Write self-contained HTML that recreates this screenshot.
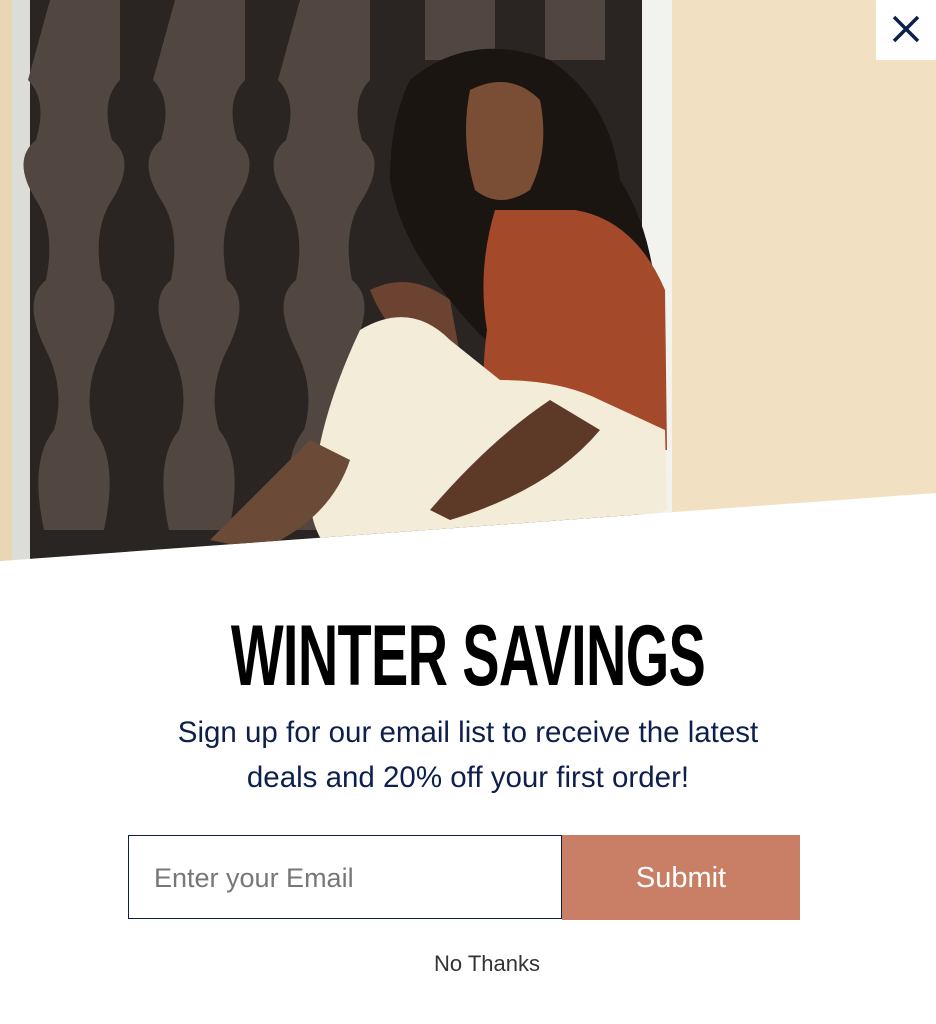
<!DOCTYPE html>
<html><head><meta charset="utf-8"><style>
html,body{margin:0;padding:0;width:936px;height:1024px;overflow:hidden;background:#fff;font-family:"Liberation Sans",sans-serif}
.photo{position:absolute;left:0;top:0}
.close{position:absolute;left:876px;top:0;width:60px;height:60px;background:#fff}
h1{position:absolute;left:0;width:936px;top:606px;margin:0;text-align:center;font-size:86px;font-weight:bold;color:#000;letter-spacing:-1px;transform:scaleX(0.65);transform-origin:center;line-height:100px}
.sub{position:absolute;left:0;width:936px;top:710px;text-align:center;color:#0d1f4a;font-size:29.5px;line-height:45px}
.inp{position:absolute;left:128px;top:835px;width:432px;height:82px;border:1.5px solid #0d1f4a;box-sizing:content-box}
.inp span{position:absolute;left:25px;top:27px;font-size:27px;color:#777}
.btn{position:absolute;left:562px;top:835px;width:238px;height:85px;background:#c97f66;color:#fff;font-size:29px;text-align:center;line-height:87px}
.no{position:absolute;left:0;width:974px;top:951px;text-align:center;font-size:22px;color:#333}
</style></head><body>
<svg class="photo" width="936" height="562" viewBox="0 0 936 562">
<defs><clipPath id="c"><polygon points="0,0 936,0 936,493 0,561"/></clipPath></defs>
<g clip-path="url(#c)">
<rect width="936" height="562" fill="#f2e0c3"/>
<rect x="0" y="0" width="14" height="562" fill="#e8d6b4"/>
<rect x="12" y="0" width="20" height="562" fill="#dcdcd8"/>
<rect x="640" y="0" width="32" height="562" fill="#f2f2ee"/>
<rect x="30" y="0" width="612" height="562" fill="#2a2522"/>
<g fill="#514740">
<path d="M50 0h70v80q-20 20 -8 60q25 20 0 60q-20 30 -10 80q25 20 0 70q-20 40 -8 80q25 30 10 100h-60q-15-70 10-100q12-40-8-80q-25-50 0-70q10-50-10-80q-25-40 0-60q12-40-8-60z"/>
<path d="M175 0h70v80q-20 20 -8 60q25 20 0 60q-20 30 -10 80q25 20 0 70q-20 40 -8 80q25 30 10 100h-60q-15-70 10-100q12-40-8-80q-25-50 0-70q10-50-10-80q-25-40 0-60q12-40-8-60z"/>
<path d="M300 0h70v80q-20 20 -8 60q25 20 0 60q-20 30 -10 80q25 20 0 70q-20 40 -8 80q25 30 10 100h-60q-15-70 10-100q12-40-8-80q-25-50 0-70q10-50-10-80q-25-40 0-60q12-40-8-60z"/>
<path d="M425 0h70v60h-70z"/><path d="M545 0h60v60h-60z"/>
</g>
<path d="M410 80q60-50 140-20q60 40 70 120q40 60 40 180l-60 40q-80-10-150-100q-50-60-60-120q0-60 20-100z" fill="#1b1512"/>
<path d="M470 90q40-20 70 10q10 50-10 90q-30 20-55 0q-15-50-5-100z" fill="#7a4e35"/>
<path d="M495 210h80q60 10 90 80l2 160l-170 10q-20-60-10-130q-10-60 8-120z" fill="#a4492a"/>
<path d="M370 290q40-20 80 10l20 110q-10 30-30 10l-20-80q-30 0-50-50z" fill="#6c4330"/>
<path d="M360 330q50-30 90 10l50 40q60 0 100 20l65 30l2 80q-100 30-230 40l-100 10q-40-40-20-100q10-60 43-130z" fill="#f3ecd9"/>
<path d="M210 540q60-60 100-100l40 20q-20 60-90 90z" fill="#6b4a38"/>
<path d="M430 510q60-70 120-110l50 30q-50 60-150 90z" fill="#5d3a28"/>
</g>
</svg>
<div class="close"><svg width="60" height="60"><path d="M18 17L42 41M42 17L18 41" stroke="#0d1f4a" stroke-width="3.5" fill="none"/></svg></div>
<h1>WINTER SAVINGS</h1>
<div class="sub">Sign up for our email list to receive the latest<br>deals and 20% off your first order!</div>
<div class="inp"><span>Enter your Email</span></div>
<div class="btn">Submit</div>
<div class="no">No Thanks</div>
</body></html>
